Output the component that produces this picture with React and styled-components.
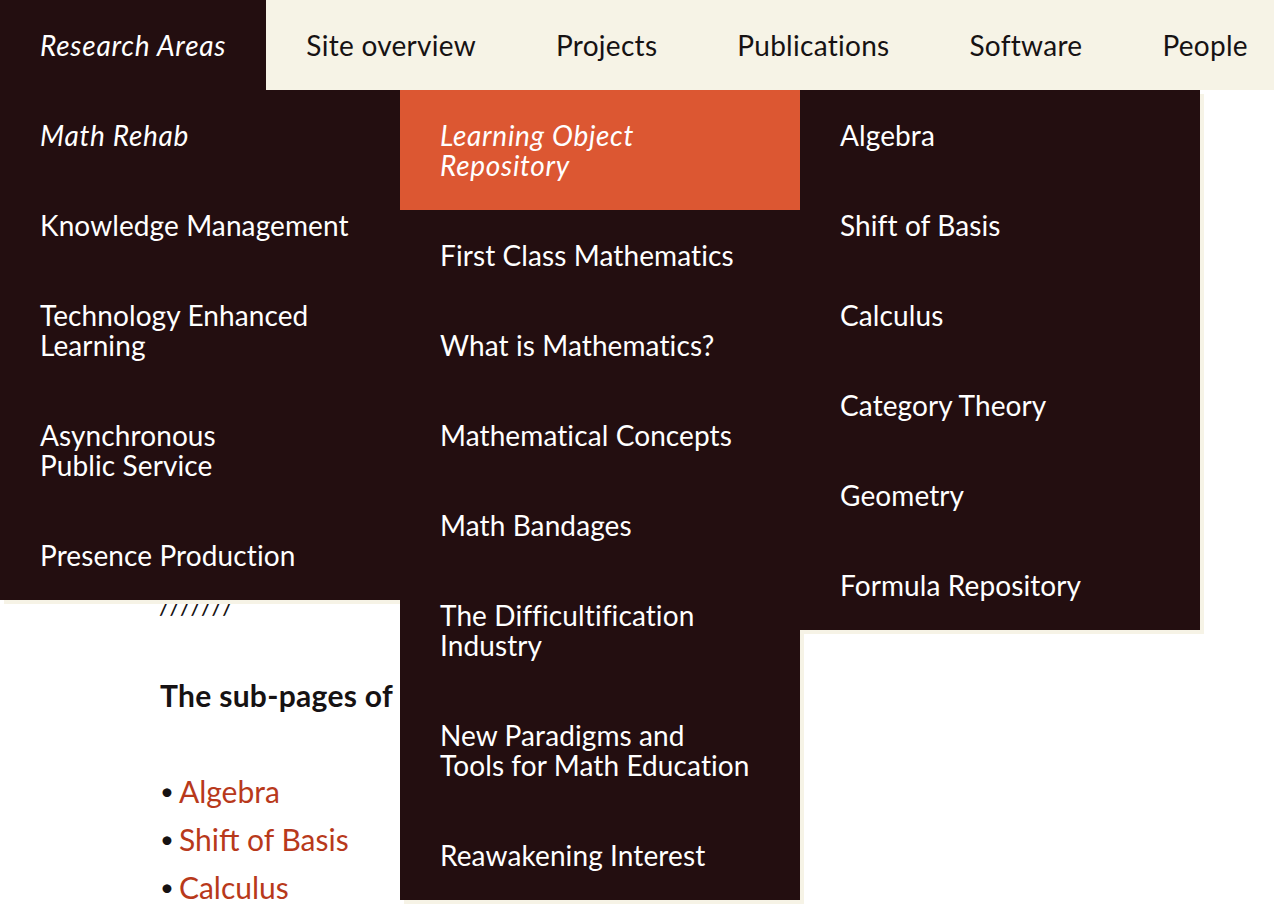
import React from 'react'
import styled, {createGlobalStyle} from 'styled-components'

const GlobalStyle = createGlobalStyle`
    html, body {
        margin: 0;
        padding: 0;
        background: #fff;
        font-family: Lato, "Noto Sans", sans-serif;
        color: #161213;
    }
    * { box-sizing: border-box; }
`;

// Colours
const dark = '#230e10'
const cream = '#f6f3e6'
const orange = '#dc5732'
const linkRed = '#b8391b'

const navItems = ['Research Areas', 'Site overview', 'Projects', 'Publications', 'Software', 'People']

const columns = [
    [
        {label: 'Math Rehab', active: true},
        {label: 'Knowledge Management'},
        {label: 'Technology Enhanced Learning'},
        {label: 'Asynchronous\nPublic Service'},
        {label: 'Presence Production'},
    ],
    [
        {label: 'Learning Object\nRepository', active: true, current: true},
        {label: 'First Class Mathematics'},
        {label: 'What is Mathematics?'},
        {label: 'Mathematical Concepts'},
        {label: 'Math Bandages'},
        {label: 'The Difficultification\nIndustry'},
        {label: 'New Paradigms and\nTools for Math Education'},
        {label: 'Reawakening Interest'},
    ],
    [
        {label: 'Algebra'},
        {label: 'Shift of Basis'},
        {label: 'Calculus'},
        {label: 'Category Theory'},
        {label: 'Geometry'},
        {label: 'Formula Repository'},
    ],
]

const subPages = ['Algebra', 'Shift of Basis', 'Calculus']

const App = () => {
    return (
        <Page>
            <GlobalStyle/>
            <Header>
                <NavBar>
                    {navItems.map((item, i) => (
                        <NavItem key={item} $open={i === 0}>{item}</NavItem>
                    ))}
                </NavBar>
                <Dropdown>
                    {columns.map((col, c) => (
                        <Column key={c}>
                            {col.map(entry => (
                                <MenuItem key={entry.label} $active={entry.active} $current={entry.current}>
                                    {entry.label}
                                </MenuItem>
                            ))}
                        </Column>
                    ))}
                </Dropdown>
            </Header>
            <Main>
                <Title>Learning Object Repository</Title>
                <Intro>
                    A collection of learning objects for the mathematics
                    curriculum, each written as a small self-contained unit.
                </Intro>
                <Divider>///////</Divider>
                <SubHeading>The sub-pages of Learning Object Repository:</SubHeading>
                <List>
                    {subPages.map(p => (
                        <ListItem key={p}><a href="#">{p}</a></ListItem>
                    ))}
                </List>
            </Main>
        </Page>
    )
}

const Page = styled.div`
    width: 1274px;
    min-height: 910px;
    overflow: hidden;
`;

const Header = styled.header`
    position: relative;
    z-index: 2;
`;

const NavBar = styled.nav`
    display: flex;
    height: 90px;
    background: ${cream};
`;

const NavItem = styled.div`
    display: flex;
    align-items: center;
    padding: 0 40px;
    font-size: 28px;
    white-space: nowrap;
    letter-spacing: ${p => p.$open ? '0.75px' : '0.28px'};
    background: ${p => p.$open ? dark : 'transparent'};
    color: ${p => p.$open ? '#fff' : '#161213'};
    font-style: ${p => p.$open ? 'italic' : 'normal'};
`;

const Dropdown = styled.div`
    position: absolute;
    top: 90px;
    left: 0;
    display: flex;
    align-items: flex-start;
`;

const Column = styled.ul`
    list-style: none;
    margin: 0;
    padding: 0;
    width: 400px;
    background: ${dark};
    box-shadow: 4px 4px 0 ${cream};
`;

const MenuItem = styled.li`
    padding: 30px 40px;
    font-size: 28px;
    line-height: 30px;
    white-space: pre-line;
    color: #fff;
    letter-spacing: ${p => p.$active ? '0.7px' : '0.1px'};
    font-style: ${p => p.$active ? 'italic' : 'normal'};
    background: ${p => p.$current ? orange : 'transparent'};
`;

const Main = styled.main`
    padding: 0 0 0 160px;
    width: 800px;
`;

const Title = styled.h1`
    margin: 0;
    padding-top: 60px;
    font-size: 48px;
    line-height: 56px;
`;

const Intro = styled.p`
    margin: 24px 0 0;
    font-size: 26px;
    line-height: 40px;
`;

const Divider = styled.div`
    margin-top: 288px;
    font-size: 18px;
    line-height: 20px;
    font-style: italic;
    font-weight: 700;
    letter-spacing: 6.5px;
`;

const SubHeading = styled.h2`
    margin: 57px 0 0;
    font-size: 30px;
    line-height: 40px;
    font-weight: 700;
    letter-spacing: 0.3px;
`;

const List = styled.ul`
    list-style: none;
    margin: 52px 0 0;
    padding: 0;
`;

const ListItem = styled.li`
    display: flex;
    align-items: center;
    height: 48px;
    font-size: 30px;
    line-height: 48px;

    &::before {
        content: '•';
        color: #161213;
        margin-right: 5px;
        font-size: 24px;
    }

    a {
        color: ${linkRed};
        text-decoration: none;
    }
`;

export default App
